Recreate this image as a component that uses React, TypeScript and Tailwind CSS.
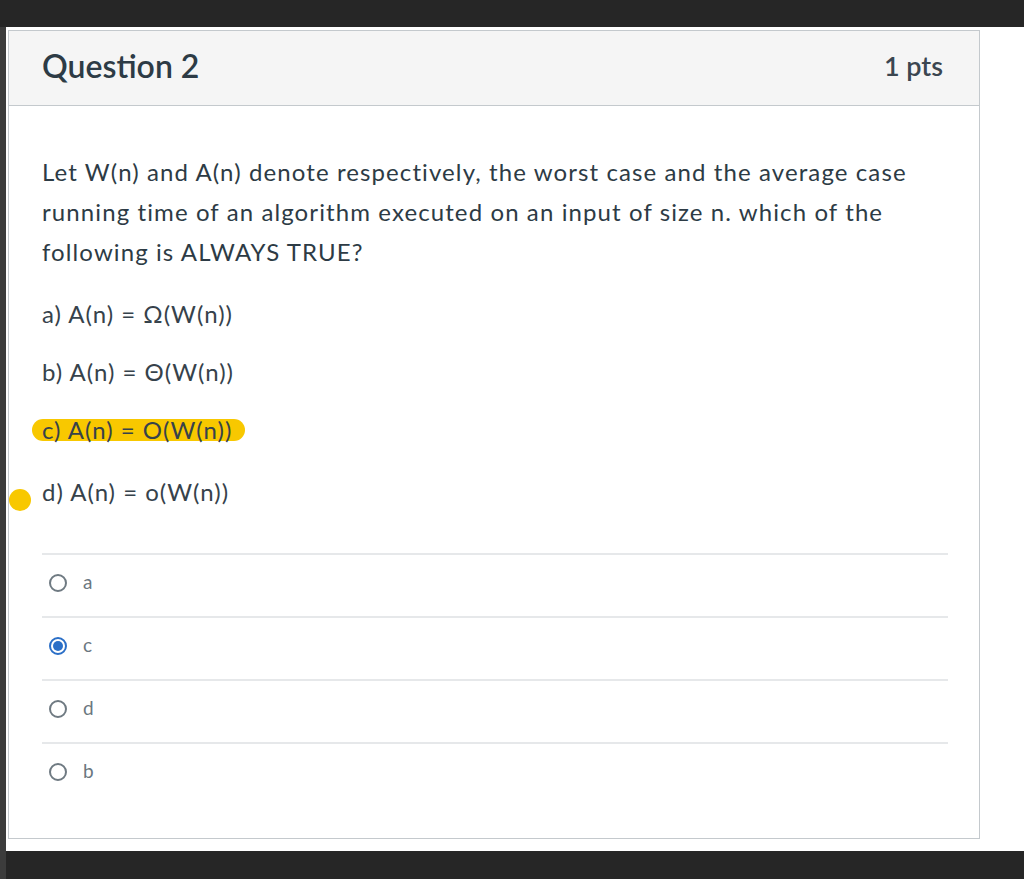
const options = [
  { key: 'a', text: 'a) A(n) = Ω(W(n))', mt: 'mt-[22px]' },
  { key: 'b', text: 'b) A(n) = Θ(W(n))', mt: 'mt-[18px]' },
  { key: 'c', text: 'c) A(n) = O(W(n))', mt: 'mt-[18px]', marked: true },
  { key: 'd', text: 'd) A(n) = o(W(n))', mt: 'mt-[22px]', dot: true },
]

const answers = [
  { label: 'a' },
  { label: 'c', checked: true },
  { label: 'd' },
  { label: 'b' },
]

function Radio({ checked }: { checked?: boolean }) {
  if (checked) {
    return (
      <span className="flex h-[18px] w-[18px] items-center justify-center rounded-full border-2 border-[#2b6fc7]">
        <span className="h-[10px] w-[10px] rounded-full bg-[#2b6fc7]" />
      </span>
    )
  }
  return <span className="h-[18px] w-[18px] rounded-full border-2 border-[#6f7a82]" />
}

export default function App() {
  return (
    <div className="flex h-[879px] w-[1024px] flex-col bg-[#262626] font-['Lato','Noto_Sans',sans-serif] text-[#2d3b45]">
      <div className="h-[27px] shrink-0" />
      <div className="flex flex-1">
        <div className="w-[6px] shrink-0 bg-[#3c3c3c]" />
        <div className="flex flex-1 flex-col">
          <div className="flex h-[824px] flex-col bg-white pl-[2px] pt-[3px]">
            <section className="relative flex h-[809px] w-[972px] flex-col border border-[#c4c9cd]">
              {/* Header */}
              <header className="flex h-[75px] shrink-0 items-center justify-between border-b border-[#c4c9cd] bg-[#f5f5f5] pb-[4px] pl-[33px] pr-[36px]">
                <h2 className="text-[32px] font-semibold text-[#2d3b45]">Question 2</h2>
                <span className="text-[27px] font-semibold text-[#3b4650]">1 pts</span>
              </header>

              {/* Body */}
              <div className="px-[33px] pt-[46px]">
                <p className="text-[24px] leading-[40px] tracking-[1.1px] text-[#2d3b45]">
                  Let W(n) and A(n) denote respectively, the worst case and the average case
                  <br />
                  running time of an algorithm executed on an input of size n. which of the
                  <br />
                  following is ALWAYS TRUE?
                </p>

                <div className="flex flex-col">
                  {options.map((o) => (
                    <div key={o.key} className={`relative h-[40px] text-[24px] leading-[40px] tracking-[1px] text-[#36424b] ${o.mt}`}>
                      {o.marked && (
                        <span className="absolute left-[-10px] top-[9px] h-[22px] w-[213px] rounded-full bg-[#f8c800]" />
                      )}
                      {o.dot && (
                        <span className="absolute left-[-33px] top-[17px] h-[22px] w-[22px] rounded-full bg-[#f8c800]" />
                      )}
                      <span className="relative">{o.text}</span>
                    </div>
                  ))}
                </div>

                {/* Answers */}
                <div className="mt-[41px] w-[906px]">
                  {answers.map((a) => (
                    <div key={a.label} className="flex h-[63px] items-center gap-[16px] border-t-2 border-[#e6e8ea] pb-[6px] pl-[7px]">
                      <Radio checked={a.checked} />
                      <span className="text-[19px] text-[#6b7780]">{a.label}</span>
                    </div>
                  ))}
                </div>
              </div>
            </section>
          </div>
          <div className="flex-1" />
        </div>
      </div>
    </div>
  )
}
